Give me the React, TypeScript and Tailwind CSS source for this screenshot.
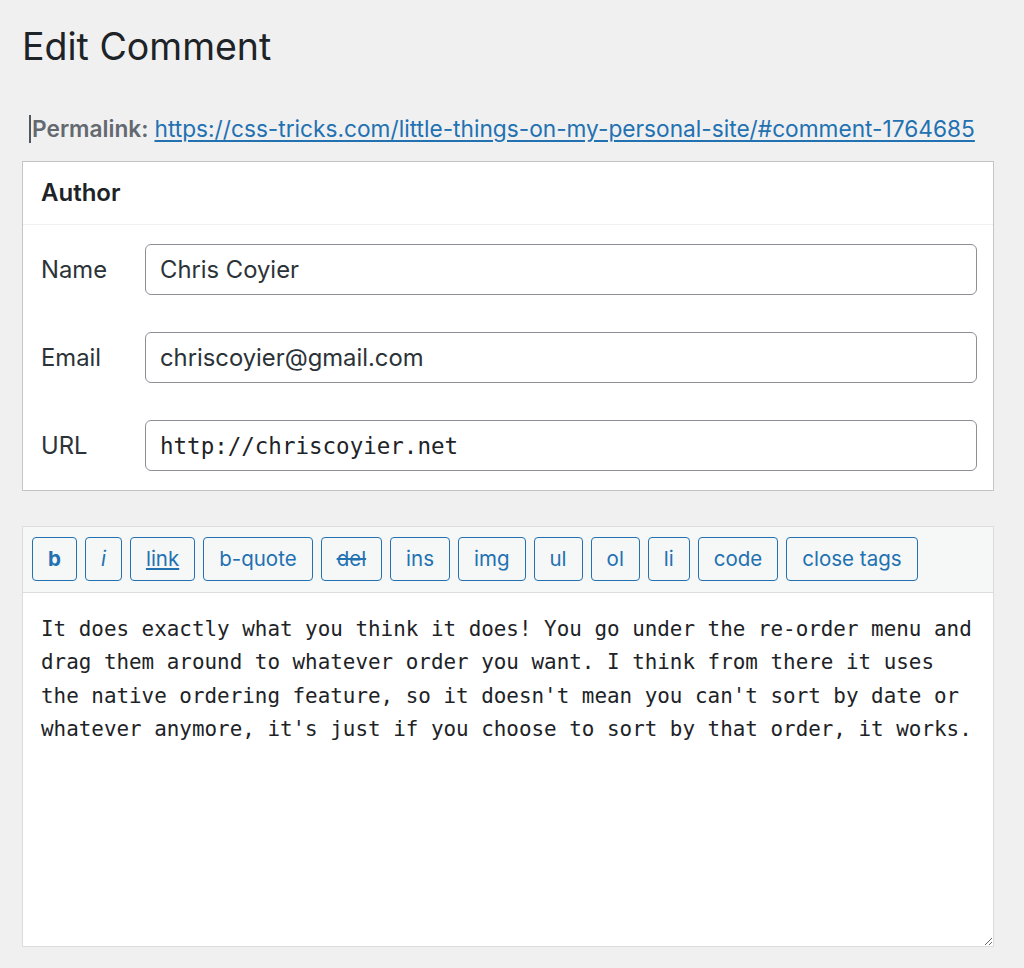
const tags = [
  { label: 'b', cls: 'font-bold' },
  { label: 'i', cls: 'italic' },
  { label: 'link', cls: 'underline' },
  { label: 'b-quote', cls: '' },
  { label: 'del', cls: 'line-through' },
  { label: 'ins', cls: '' },
  { label: 'img', cls: '' },
  { label: 'ul', cls: '' },
  { label: 'ol', cls: '' },
  { label: 'li', cls: '' },
  { label: 'code', cls: '' },
  { label: 'close tags', cls: '' },
]

const comment = [
  'It does exactly what you think it does! You go under the re-order menu and',
  'drag them around to whatever order you want. I think from there it uses',
  "the native ordering feature, so it doesn't mean you can't sort by date or",
  "whatever anymore, it's just if you choose to sort by that order, it works.",
].join('\n')

function Field({ label, value, mono }: { label: string; value: string; mono?: boolean }) {
  return (
    <div className="flex items-center">
      <label className="w-[104px] shrink-0 text-[23.8px] text-[#2c3338]">{label}</label>
      <input
        readOnly
        defaultValue={value}
        className={
          mono
            ? "h-[51px] flex-1 rounded-[6px] border border-[#8c8f94] bg-white px-[14px] font-['DejaVu_Sans_Mono',monospace] text-[22.5px] text-[#1d2327] outline-none"
            : 'h-[51px] flex-1 rounded-[6px] border border-[#8c8f94] bg-white px-[14px] text-[23.8px] text-[#2c3338] outline-none'
        }
      />
    </div>
  )
}

export default function App() {
  return (
    <main className="min-h-[968px] bg-[#f0f0f1] px-[22px] pt-[23px] pr-[30px] font-['Inter',sans-serif] text-[#1d2327]">
      <h1 className="text-[37.5px] leading-[48px] font-normal">Edit Comment</h1>

      <div className="mt-[43px] flex items-center pl-[7px] text-[22.7px] leading-[30px]">
        <span className="mr-[1px] h-[28px] w-[2px] bg-[#50575e]" />
        <strong className="font-semibold text-[#646970]">Permalink:</strong>
        <a href="#" className="ml-[6px] text-[#2271b1] underline underline-offset-[3px]">
          https://css-tricks.com/little-things-on-my-personal-site/#comment-1764685
        </a>
      </div>

      <section className="mt-[17px] border border-[#c3c4c7] bg-white">
        <div className="flex h-[63px] items-center border-b border-[#f0f0f1] px-[18px]">
          <h2 className="text-[24px] leading-[30px] font-semibold">Author</h2>
        </div>
        <div className="flex flex-col gap-[37px] pt-[19px] pb-[19px] pl-[18px] pr-[16px]">
          <Field label="Name" value="Chris Coyier" />
          <Field label="Email" value="chriscoyier@gmail.com" />
          <Field label="URL" value="http://chriscoyier.net" mono />
        </div>
      </section>

      <section className="mt-[35px] border border-[#dcdcde] bg-white">
        <div className="flex gap-2 border-b border-[#dcdcde] bg-[#f6f7f7] px-[9px] pt-[10px] pb-[11px]">
          {tags.map((t) => (
            <button
              key={t.label}
              className={`h-[44px] rounded-[4px] border border-[#2271b1] bg-[#f6f7f7] px-[15px] text-[20.5px] text-[#2271b1] ${t.cls}`}
            >
              {t.label}
            </button>
          ))}
        </div>
        <textarea
          readOnly
          wrap="off"
          defaultValue={comment}
          className="block h-[353px] w-full overflow-hidden bg-white px-[18px] pt-[20px] font-['DejaVu_Sans_Mono',monospace] text-[20.9px] leading-[33.25px] text-[#1d2327] outline-none"
        />
      </section>
    </main>
  )
}
